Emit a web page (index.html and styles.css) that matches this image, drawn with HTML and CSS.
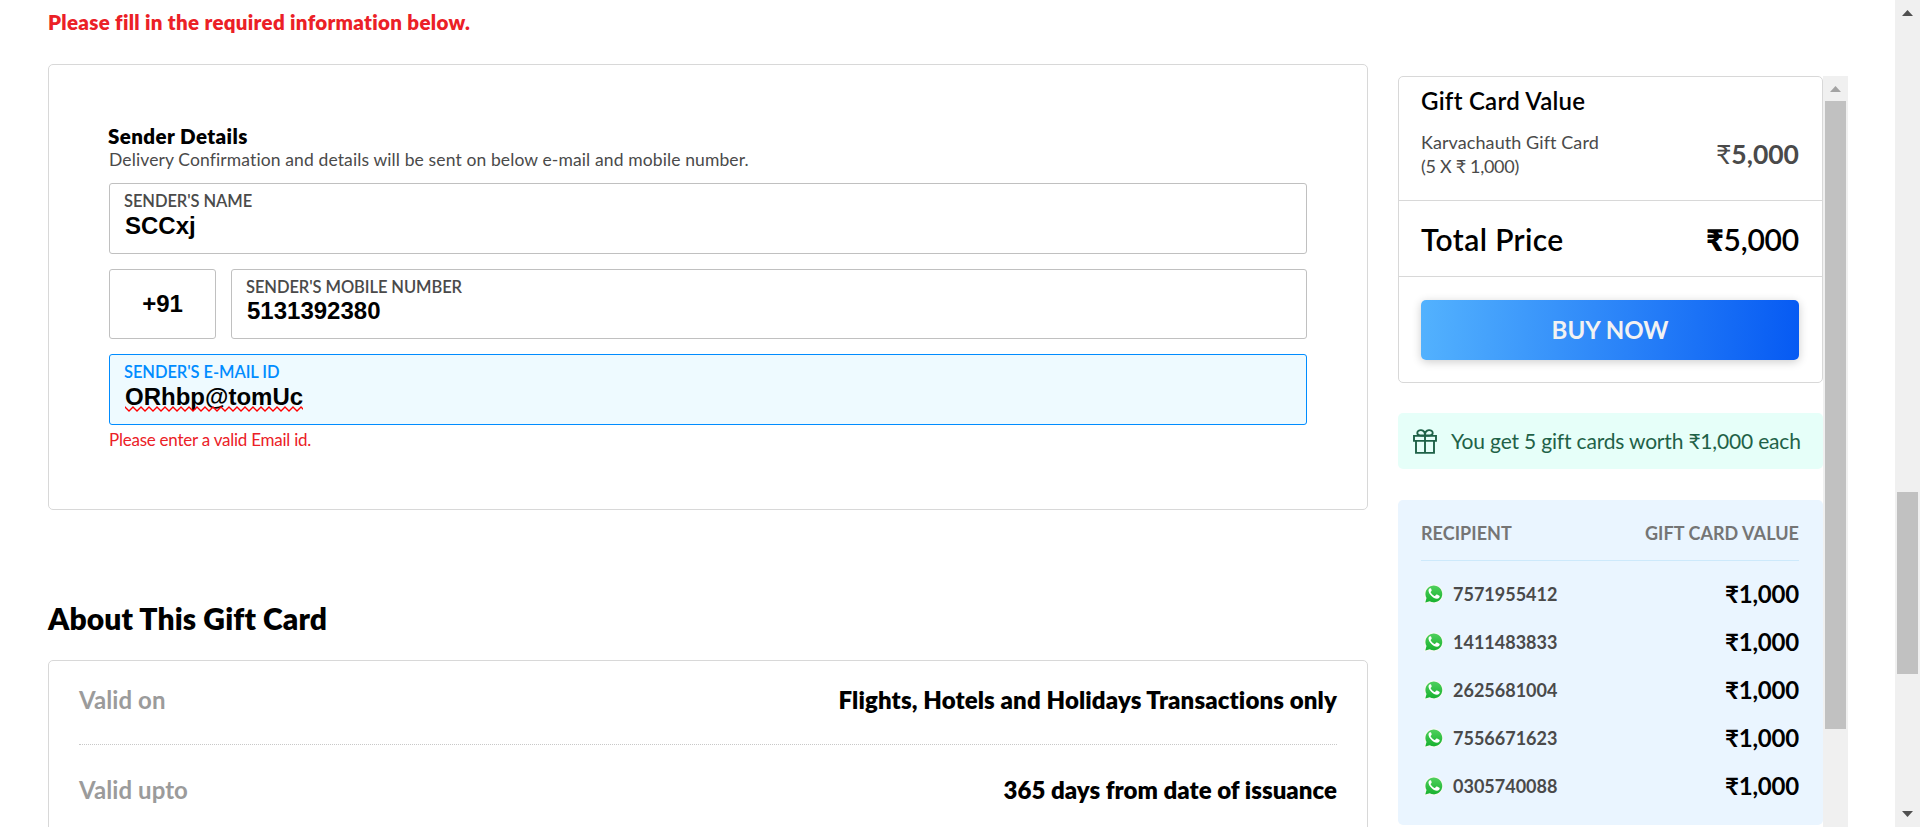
FILE: index.html
```html
<!DOCTYPE html>
<html lang="en">
<head>
<meta charset="utf-8">
<title>Gift Card</title>
<link rel="stylesheet" href="styles.css">
</head>
<body>
<svg class="defs" width="0" height="0" aria-hidden="true">
  <defs>
    <linearGradient id="wa-green" x1="0" y1="0" x2="0" y2="1">
      <stop offset="0" stop-color="#4fd05c"/><stop offset="1" stop-color="#17b12f"/>
    </linearGradient>
    <symbol id="whatsapp" viewBox="0 0 24 24">
      <path fill="#f5f8f5" d="M2 22.200 3.200 17A9.800 9.800 0 1 1 7.300 20.800Z"/>
      <path fill="url(#wa-green)" d="M3.300 20.500 4.500 16.100A8.400 8.400 0 1 1 7.700 19.300Z"/>
      <path fill="#fff" d="M9.200 6.800c-.3-.6-.6-.6-1-.6-.9 0-1.700 1-1.700 2.300 0 3.400 4.600 8.200 8.500 8.200 1.500 0 2.700-1 2.700-2.200 0-.4 0-.6-.3-.8l-2.300-1.200c-.4-.2-.7-.1-1 .2l-.9 1.100c-.2.3-.5.300-.8.200-1.500-.6-2.900-1.900-3.700-3.400-.2-.3-.1-.5.100-.8l.7-.9c.2-.3.200-.5.100-.8z"/>
    </symbol>
  </defs>
</svg>
<div class="viewport">
  <main class="main">
    <p class="notice">Please fill in the required information below.</p>
    <section class="card sender">
      <h2 class="sender-title">Sender Details</h2>
      <p class="sender-sub">Delivery Confirmation and details will be sent on below e-mail and mobile number.</p>
      <div class="field">
        <span class="label">SENDER'S NAME</span>
        <span class="value">SCCxj</span>
      </div>
      <div class="phone">
        <div class="code">+91</div>
        <div class="field field-phone">
          <span class="label">SENDER'S MOBILE NUMBER</span>
          <span class="value">5131392380</span>
        </div>
      </div>
      <div class="field field-active">
        <span class="label">SENDER'S E-MAIL ID</span>
        <span class="value misspelt">ORhbp@tomUc
          <svg class="squiggle" width="178" height="6"><defs><pattern id="wave" width="8" height="6" patternUnits="userSpaceOnUse"><path d="M-1 0 0 1 4 5 8 1 9 0" fill="none" stroke="#f00" stroke-width="1.300"/></pattern></defs><rect width="178" height="6" fill="url(#wave)"/></svg></span>
      </div>
      <p class="error">Please enter a valid Email id.</p>
    </section>
    <h1 class="about-title">About This Gift Card</h1>
    <section class="card about">
      <div class="about-row"><span class="about-key">Valid on</span><span class="about-val">Flights, Hotels and Holidays Transactions only</span></div>
      <div class="about-row"><span class="about-key">Valid upto</span><span class="about-val about-val-days">365 days from date of issuance</span></div>
    </section>
  </main>
  <aside class="side">
    <div class="side-body">
      <section class="card summary">
        <div class="gift">
          <h3 class="gift-title">Gift Card Value</h3>
          <div class="gift-line">
            <p class="gift-name">Karvachauth Gift Card<br><span class="gift-count">(5 X ₹ 1,000)</span></p>
            <span class="gift-price"><span class="rupee-light">₹</span>5,000</span>
          </div>
        </div>
        <div class="total"><span class="total-key">Total Price</span><span class="total-val"><span class="rupee-bold">₹</span>5,000</span></div>
        <div class="buy"><button class="buy-btn">BUY NOW</button></div>
      </section>
      <div class="promo">
        <svg class="gift-icon" width="24" height="25" viewBox="0 0 24 25" fill="none" stroke="#1f6248" stroke-width="1.900">
          <path d="M1 6.900h22v5H1zM3 11.900h18v12H3zM12 6.900v17"/>
          <path d="M12 6.500C10.500 6.500 4.300 7.200 4.300 3.900c0-3.600 7.700-4.600 7.700 2.600 0-7.200 7.700-6.200 7.700-2.600 0 3.300-6.200 2.600-7.700 2.600z"/>
        </svg>
        <span class="promo-text">You get 5 gift cards worth ₹1,000 each</span>
      </div>
      <section class="recipients">
        <div class="rec-head"><span>RECIPIENT</span><span>GIFT CARD VALUE</span></div>
        <div class="rec-row"><svg class="wa" width="24" height="24"><use href="#whatsapp"/></svg><span class="rec-num">7571955412</span><span class="rec-val">₹1,000</span></div>
        <div class="rec-row"><svg class="wa" width="24" height="24"><use href="#whatsapp"/></svg><span class="rec-num">1411483833</span><span class="rec-val">₹1,000</span></div>
        <div class="rec-row"><svg class="wa" width="24" height="24"><use href="#whatsapp"/></svg><span class="rec-num">2625681004</span><span class="rec-val">₹1,000</span></div>
        <div class="rec-row"><svg class="wa" width="24" height="24"><use href="#whatsapp"/></svg><span class="rec-num">7556671623</span><span class="rec-val">₹1,000</span></div>
        <div class="rec-row"><svg class="wa" width="24" height="24"><use href="#whatsapp"/></svg><span class="rec-num">0305740088</span><span class="rec-val">₹1,000</span></div>
      </section>
    </div>
    <div class="scroll scroll-side">
      <svg class="arrow" width="11" height="6" viewBox="0 0 11 6"><path fill="#a3a3a3" d="M5.500 0 11 6H0z"/></svg>
      <div class="thumb thumb-side"></div>
    </div>
  </aside>
  <div class="scroll scroll-page">
    <svg class="arrow" width="11" height="6" viewBox="0 0 11 6"><path fill="#505050" d="M5.500 0 11 6H0z"/></svg>
    <div class="thumb thumb-page"></div>
    <svg class="arrow arrow-down" width="11" height="6" viewBox="0 0 11 6"><path fill="#505050" d="M0 0h11L5.500 6z"/></svg>
  </div>
</div>
</body>
</html>
```
FILE: styles.css
```css
* { box-sizing: border-box; }
html, body { margin: 0; height: 827px; overflow: hidden; background: #fff; }
body { font-family: Lato, "Noto Sans", sans-serif; color: #000; }
h1, h2, h3, p { margin: 0; }
.defs { position: absolute; }
.viewport { display: flex; width: 1920px; height: 827px; overflow: hidden; }
.card { border: 1px solid #d8d8d8; border-radius: 5px; background: #fff; }

.main { width: 1320px; margin-left: 48px; padding-top: 10px; flex: none; }
.notice { height: 54px; font-size: 20.5px; line-height: 24px; font-weight: 800; letter-spacing: .31px; color: #eb2026; }
.sender { height: 446px; padding: 59px 60px 0; }
.sender-title { font-size: 20.5px; line-height: 24px; font-weight: 800; letter-spacing: .42px; margin-left: -1px; }
.sender-sub { font-size: 17.5px; line-height: 24px; letter-spacing: .12px; color: #4a4a4a; margin-bottom: 11px; }
.field { height: 71px; border: 1px solid #c0c0c0; border-radius: 3px; padding: 7px 14px 0; display: flex; flex-direction: column; }
.label { font-size: 16.500px; line-height: 21px; font-weight: 600; letter-spacing: -.08px; color: #4a4a4a; }
.value { font-family: "Liberation Sans", sans-serif; font-size: 24px; line-height: 28px; font-weight: 700; padding-left: 1px; }
.phone { display: flex; gap: 15px; margin: 15px 0; }
.code { width: 107px; height: 70px; border: 1px solid #c0c0c0; border-radius: 3px; font: 700 24px/67px "Liberation Sans", sans-serif; text-align: center; }
.field-phone { flex: 1; height: 70px; }
.field-phone .value { line-height: 26px; }
.field-active { border-color: #008cff; background: #eefaff; }
.field-active .label { color: #008cff; }
.misspelt { position: relative; }
.squiggle { position: absolute; left: 1px; top: 23px; }
.error { font-size: 17px; line-height: 22px; letter-spacing: -.24px; color: #eb2026; margin-top: 4px; }
.about-title { font-size: 30px; line-height: 36px; font-weight: 800; letter-spacing: .12px; margin: 90px 0 24px; }
.about { height: 300px; padding: 0 30px; }
.about-row { display: flex; justify-content: space-between; height: 90px; padding-top: 31px; font-size: 24px; line-height: 28px; font-weight: 700; }
.about-row:first-child { height: 84px; padding-top: 25px; border-bottom: 1px dotted #c8c8c8; }
.about-key { color: #9b9b9b; letter-spacing: .08px; }
.about-val { font-weight: 800; letter-spacing: .12px; }
.about-val-days { letter-spacing: .03px; }

.side { width: 450px; margin: 76px 0 0 30px; display: flex; flex: none; }
.side-body { width: 425px; }
.summary { height: 307px; }
.gift { height: 124px; padding: 9px 23px 0 22px; border-bottom: 1px solid #d8d8d8; }
.gift-title { font-size: 24px; line-height: 30px; font-weight: 600; letter-spacing: .26px; }
.gift-line { display: flex; justify-content: space-between; margin-top: 14px; }
.gift-name { font-size: 18px; line-height: 24px; letter-spacing: .08px; color: #4a4a4a; }
.gift-count { letter-spacing: -.3px; }
.gift-price { font-size: 26.500px; line-height: 48px; font-weight: 700; color: #4a4a4a; }
.rupee-light { font-weight: 400; }
.rupee-bold { font-weight: 800; }
.total { display: flex; justify-content: space-between; height: 76px; padding: 0 23px 0 22px; border-bottom: 1px solid #d8d8d8; font-size: 30px; line-height: 76px; font-weight: 600; }
.total-key { letter-spacing: .38px; }
.total-val { letter-spacing: -.2px; }
.buy { padding: 23px 23px 0 22px; }
.buy-btn { display: block; width: 378px; height: 60px; border: 0; padding: 0; border-radius: 5px; background: linear-gradient(93deg, #53b2fe, #065af3); box-shadow: 0 2px 10px rgba(0,0,0,.2); font: 700 24px/60px Lato, sans-serif; color: #f2f2f2; }
.promo { display: flex; align-items: center; height: 56px; margin-top: 30px; padding-left: 15px; border-radius: 5px; background: #e6fff9; color: #1f6248; }
.gift-icon { margin-right: 14px; }
.promo-text { font-size: 21px; line-height: 26px; letter-spacing: -.18px; white-space: nowrap; }
.recipients { margin-top: 31px; height: 325px; border-radius: 5px; background: #eaf5ff; padding: 0 24px 0 23px; }
.rec-head { display: flex; justify-content: space-between; height: 61px; margin-bottom: 9px; border-bottom: 1px solid #cde9fb; font-size: 18px; line-height: 67px; font-weight: 700; letter-spacing: .05px; color: #757575; }
.rec-row { display: flex; align-items: center; height: 48px; }
.wa { flex: none; margin: 0 7px 0 1px; }
.rec-num { flex: 1; font-size: 18px; font-weight: 700; color: #4a4a4a; }
.rec-val { font-size: 24px; line-height: 28px; font-weight: 700; letter-spacing: -.2px; }

.scroll { width: 25px; background: #f0f0f0; display: flex; flex-direction: column; align-items: center; }
.scroll-side { height: 751px; padding-top: 10px; }
.scroll-page { height: 827px; margin-left: 47px; padding: 10px 0; }
.thumb { width: 21px; background: #c1c1c1; }
.thumb-side { height: 628px; margin-top: 9px; }
.thumb-page { height: 182px; margin-top: 476px; }
.arrow { flex: none; }
.arrow-down { margin-top: auto; }
```
